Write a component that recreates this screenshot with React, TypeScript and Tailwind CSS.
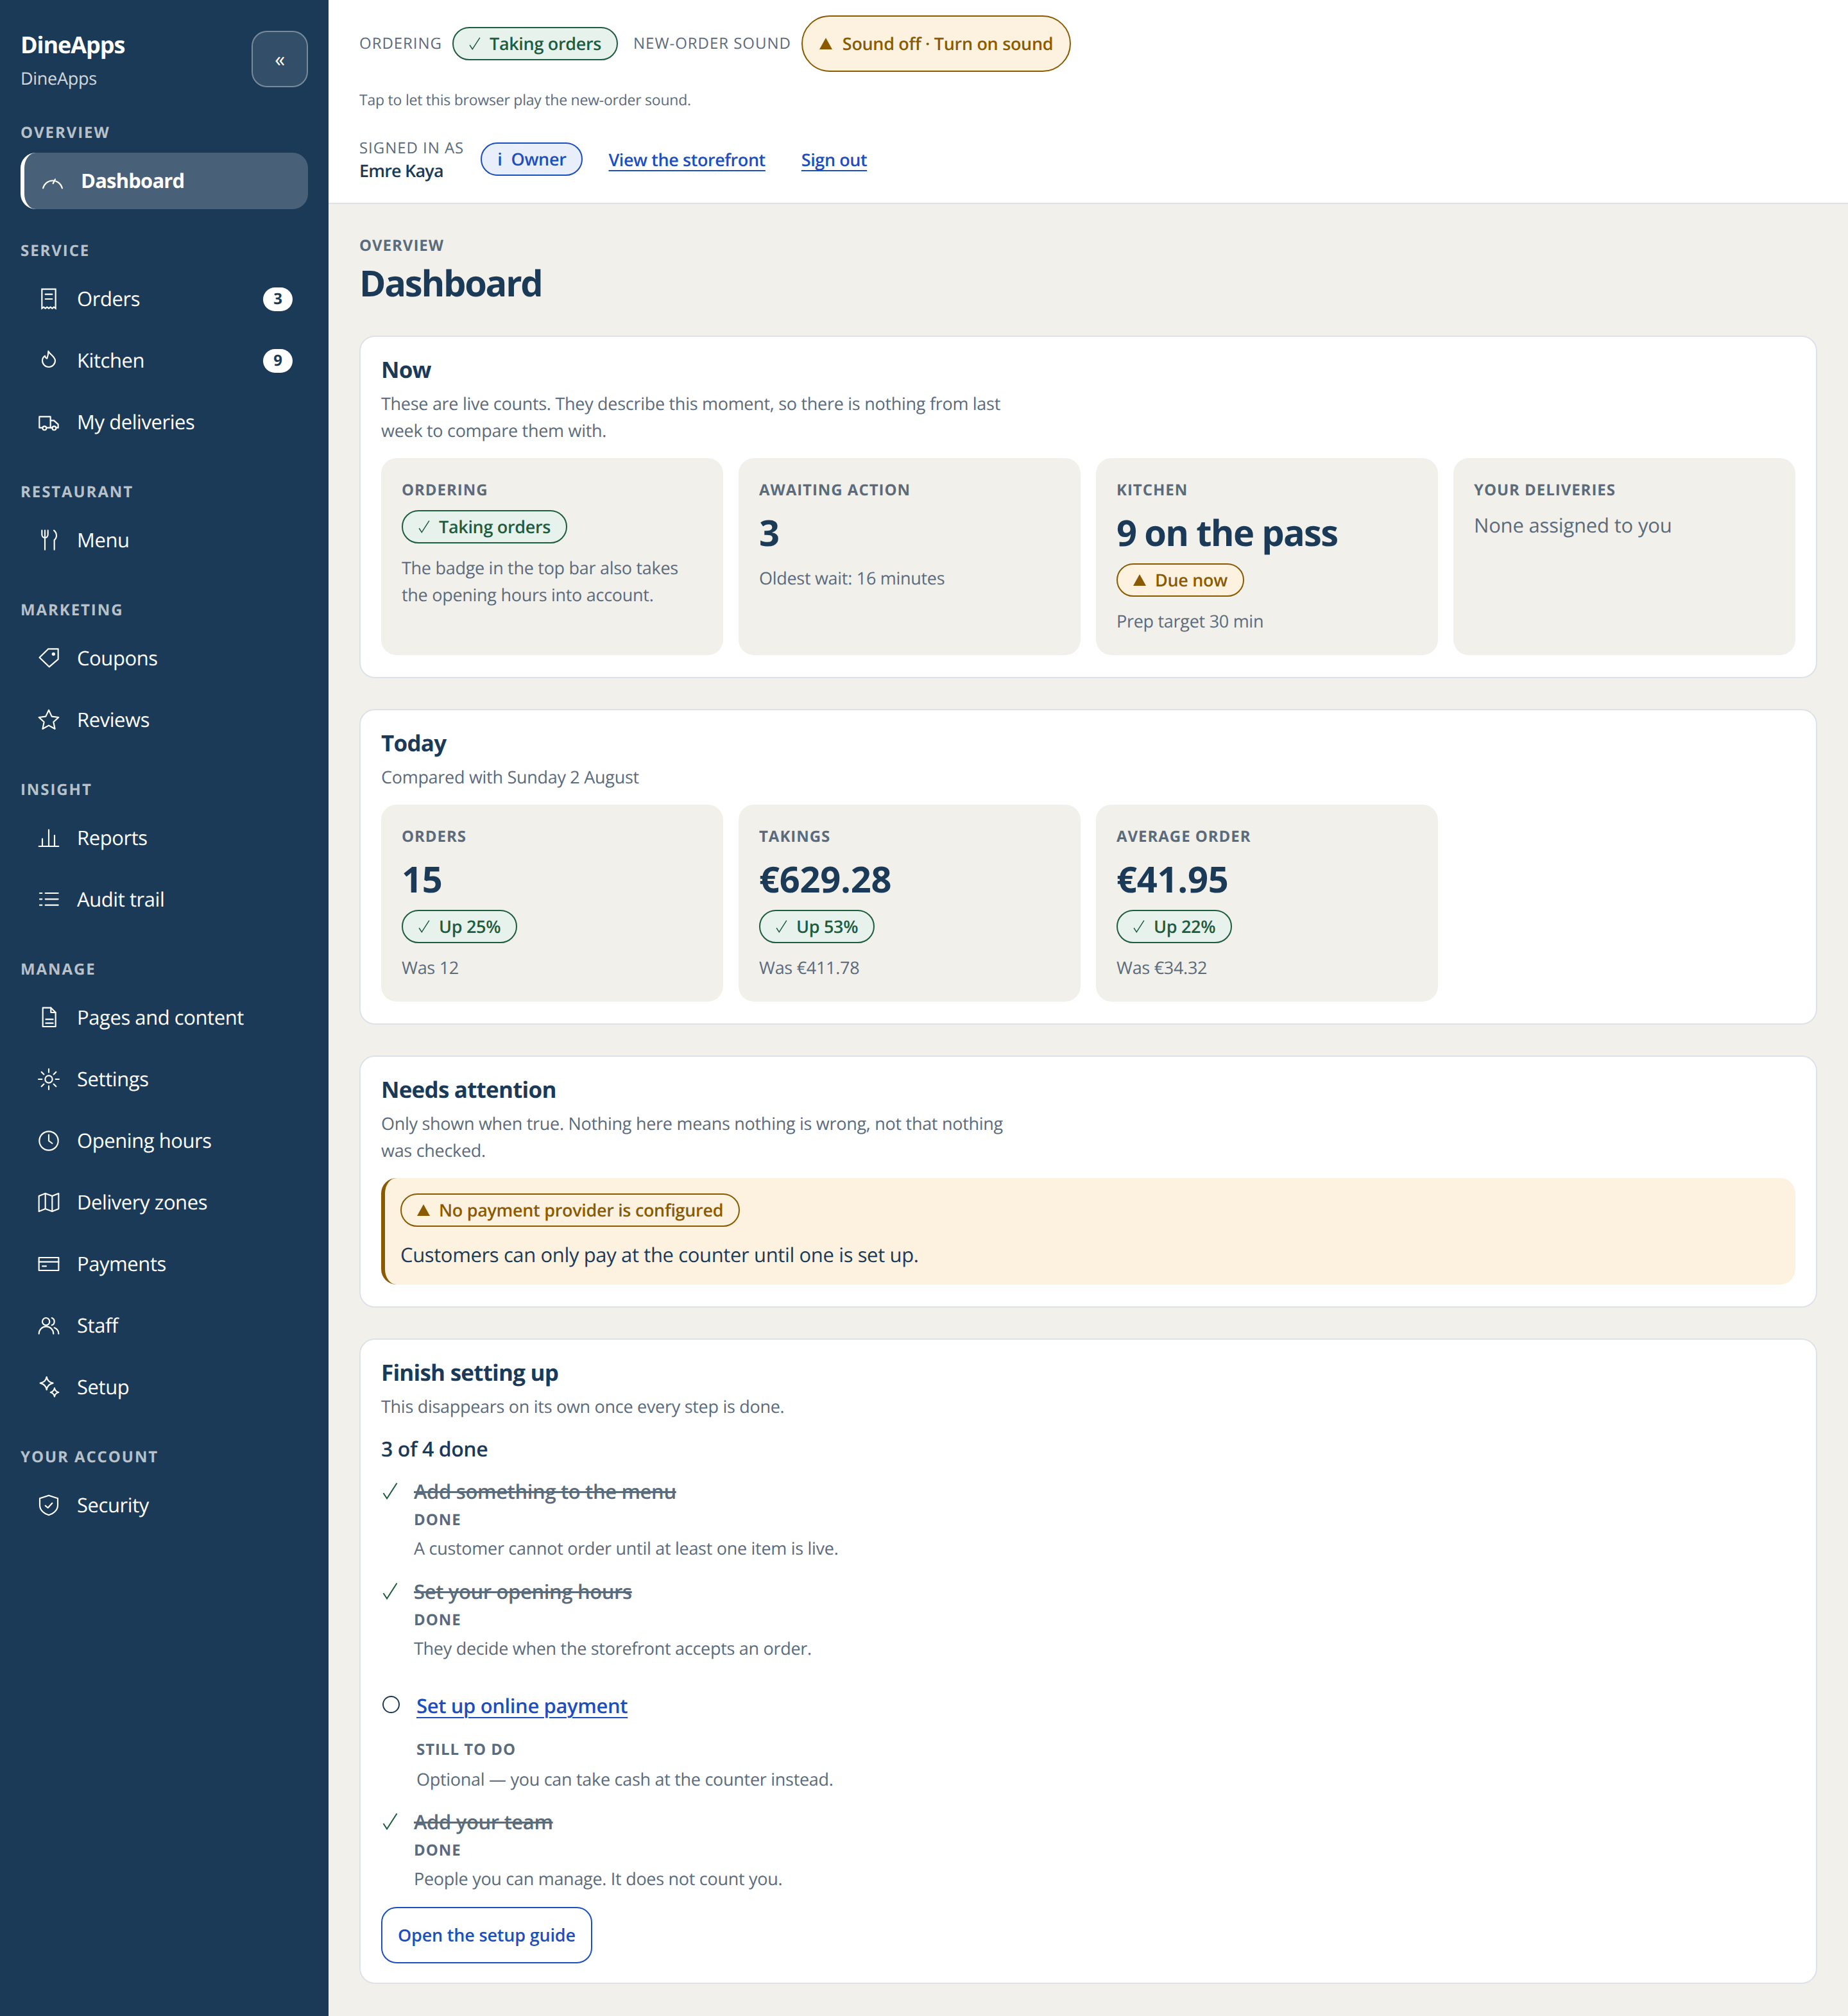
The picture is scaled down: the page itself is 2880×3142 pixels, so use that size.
import type { ReactNode } from 'react';

const Svg = ({ children }: { children: ReactNode }) => (
  <svg viewBox="0 0 24 24" className="h-8 w-8 shrink-0 overflow-visible" fill="none" stroke="currentColor" strokeWidth="1.6" strokeLinecap="round" strokeLinejoin="round">
    {children}
  </svg>
);

const icons: Record<string, ReactNode> = {
  gauge: <Svg><path d="M0.8 20.5a11.5 11.5 0 0 1 22.4 0" /><path d="M15 10l-2.5 5" /></Svg>,
  receipt: <Svg><path strokeLinejoin="miter" d="M4 0.5H20V23l-2-1.5-2 1.5-2-1.5-2 1.5-2-1.5-2 1.5-2-1.5-2 1.5Z" /><path d="M8 6.5H16M8 12H16" /></Svg>,
  flame: <Svg><path d="M11.5 1C12.5 4 19.5 7.5 19.5 12A7.5 7.5 0 0 1 4.5 12C4.5 9.5 6 7.5 7.5 6.5C7.8 8 8.5 9 10 9.5C11 7 11.5 4 11.5 1Z" /></Svg>,
  truck: <Svg><path d="M4.5 18.5H1V5.5H14V18.5H9.5" /><path d="M14 10h4l5 4.5v4h-2" /><path d="M14 18.5h2" /><circle cx="7" cy="19" r="2.2" /><circle cx="18.3" cy="19" r="2.2" /></Svg>,
  menu: <Svg><path d="M4 0.5V5.5a3.5 3.5 0 0 0 7 0V0.5M7.5 0.5V23" /><path d="M18 0.5C20 2 21 5 21 7C21 9 19.5 11 18.5 11.5V23" /></Svg>,
  tag: <Svg><path d="M1.2 11L11.5 1H23V13L12.5 22Z" /><circle cx="17.5" cy="7" r="1.2" fill="currentColor" /></Svg>,
  star: <Svg><path d="M12 0.5L15.5 8L23.5 9L17.5 14.5L19.2 22.5L12 18.5L4.8 22.5L6.5 14.5L0.5 9L8.5 8Z" /></Svg>,
  bars: <Svg><path d="M0.5 21.75H23.5M4.5 13V21.5M12 2.5V21.5M18.75 9V21.5" /></Svg>,
  list: <Svg><path d="M8 4.5H23M8 11.5H23M8 18.5H23M1.5 4.5H4M1.5 11.5H4M1.5 18.5H4" /></Svg>,
  doc: <Svg><path d="M5 0.5H14.5L20 6V22.5H5Z" /><path d="M14.5 0.5V6H20" /><path d="M8.5 14H17M8.5 18.5H17" /></Svg>,
  sun: <Svg><circle cx="12" cy="12" r="4.25" /><path d="M12 0V4M12 20V24M0 12H4M20 12H24M3.5 3.5L6.3 6.3M17.7 17.7L20.5 20.5M3.5 20.5L6.3 17.7M17.7 6.3L20.5 3.5" /></Svg>,
  clock: <Svg><circle cx="12" cy="12" r="11" /><path d="M12 5V12L16 15" /></Svg>,
  map: <Svg><path d="M0.5 4.5L8 1.5L16 4.5L23.5 1.5V19.5L16 22.5L8 19.5L0.5 22.5Z" /><path d="M8 1.5V19.5M16 4.5V22.5" /></Svg>,
  card: <Svg><rect x="0.5" y="4.5" width="23" height="15" /><path d="M0.5 9.5H23.5M4.5 14.5H9" /></Svg>,
  users: <Svg><circle cx="8.75" cy="7.25" r="4.25" /><path d="M0.5 21.5a8.5 8.5 0 0 1 17 0" /><path d="M15.5 3a4.5 4.5 0 0 1 0 8.5" /><path d="M18.5 14.5C21 15.5 23.5 18 23.5 21.5" /></Svg>,
  sparkles: <Svg><path d="M9.5 0Q10.5 6 17 7.2Q10.5 8.5 9.5 15Q8.5 8.5 2 7.2Q8.5 6 9.5 0Z" /><path d="M18.7 13Q19.3 17 23.5 18Q19.3 19 18.7 23Q18.1 19 14 18Q18.1 17 18.7 13Z" /></Svg>,
  shield: <Svg><path d="M12 0.5L22.5 4V12C22.5 18 17 22 12 23.5C7 22 1.5 18 1.5 12V4Z" /><path d="M8 12.5L11 15L16 9.5" /></Svg>,
};

const nav = [
  { label: 'Overview', items: [{ name: 'Dashboard', icon: 'gauge', active: true }] },
  { label: 'Service', items: [{ name: 'Orders', icon: 'receipt', badge: '3' }, { name: 'Kitchen', icon: 'flame', badge: '9' }, { name: 'My deliveries', icon: 'truck' }] },
  { label: 'Restaurant', items: [{ name: 'Menu', icon: 'menu' }] },
  { label: 'Marketing', items: [{ name: 'Coupons', icon: 'tag' }, { name: 'Reviews', icon: 'star' }] },
  { label: 'Insight', items: [{ name: 'Reports', icon: 'bars' }, { name: 'Audit trail', icon: 'list' }] },
  {
    label: 'Manage',
    items: [
      { name: 'Pages and content', icon: 'doc' },
      { name: 'Settings', icon: 'sun' },
      { name: 'Opening hours', icon: 'clock' },
      { name: 'Delivery zones', icon: 'map' },
      { name: 'Payments', icon: 'card' },
      { name: 'Staff', icon: 'users' },
      { name: 'Setup', icon: 'sparkles' },
    ],
  },
  { label: 'Your account', items: [{ name: 'Security', icon: 'shield' }] },
];

const CheckMark = ({ big }: { big?: boolean }) => (
  <svg viewBox="0 0 24 26" className={big ? 'h-[26px] w-6 shrink-0' : 'h-[20px] w-[18px] shrink-0'} fill="none" stroke="currentColor" strokeWidth="2">
    <path d="M1.5 16L7 24.5L22.5 0.5" />
  </svg>
);

const Triangle = () => (
  <svg viewBox="0 0 20 18" className="h-[18px] w-5 shrink-0" fill="currentColor">
    <path d="M10 0L20 18H0Z" />
  </svg>
);

type Tone = 'good' | 'warn' | 'info';

const toneClass: Record<Tone, string> = {
  good: 'border-[#1d5c3f] bg-[#e8f2ec] text-[#1d5c3f]',
  warn: 'border-[#8a5a00] bg-[#fdf2e0] text-[#8a5a00]',
  info: 'border-[#1d4ec0] bg-[#e8effb] text-[#1d4ec0]',
};

const Pill = ({ tone, children, tall }: { tone: Tone; children: ReactNode; tall?: boolean }) => (
  <span className={`inline-flex w-fit items-center rounded-full border-2 text-[27px] leading-[36px] font-semibold tracking-[-0.012em] whitespace-nowrap ${tall ? 'h-[88px] gap-[16px] px-[26px]' : 'h-[52px] gap-[14px] px-6'} ${toneClass[tone]}`}>
    {tone === 'good' && <CheckMark />}
    {tone === 'warn' && <Triangle />}
    {tone === 'info' && <span>i</span>}
    <span>{children}</span>
  </span>
);

const TileLabel = ({ children }: { children: ReactNode }) => (
  <div className="text-[24px] leading-[36px] font-bold tracking-[0.04em] text-[#5a6b7c] uppercase">{children}</div>
);

const Tile = ({ children }: { children: ReactNode }) => (
  <div className="flex flex-col rounded-[24px] bg-[#f2f0eb] p-8">{children}</div>
);

const Value = ({ children, tight }: { children: ReactNode; tight?: boolean }) => (
  <div className={`mt-[14px] text-[56px] leading-[68px] font-bold text-[#1b3a57] ${tight ? 'tracking-[-0.03em]' : 'tracking-[-0.005em]'}`}>{children}</div>
);

const Muted = ({ children, className = '' }: { children: ReactNode; className?: string }) => (
  <p className={`text-[27px] leading-[42px] text-[#5a6b7c] ${className}`}>{children}</p>
);

const Card = ({ title, desc, children, last }: { title: string; desc: string; children: ReactNode; last?: boolean }) => (
  <section className={`rounded-[24px] border-2 border-[#dde2e8] bg-white px-8 pt-8 ${last ? 'pb-[30px]' : 'mb-12 pb-[34px]'}`}>
    <h2 className="text-[35px] leading-[40px] font-bold tracking-[-0.022em] text-[#1b3a57]">{title}</h2>
    <Muted className="mt-[11px] max-w-[1000px]">{desc}</Muted>
    {children}
  </section>
);

const Step = ({ title, note }: { title: string; note: string }) => (
  <div className="mb-[25px] flex">
    <span className="mt-[8px] ml-[2px] w-[49px] shrink-0 text-[#1d5c3f]">
      <CheckMark big />
    </span>
    <div>
      <div className="text-[31px] leading-[44px] font-semibold tracking-[-0.012em] text-[#5a6b7c] line-through">{title}</div>
      <div className="mt-[4px] text-[24px] leading-[36px] font-bold tracking-[0.04em] text-[#5a6b7c]">DONE</div>
      <Muted className="mt-[5px]">{note}</Muted>
    </div>
  </div>
);

export default function App() {
  return (
    <div className="flex min-h-[3142px] w-full bg-[#f2f0eb] font-['Open_Sans',sans-serif] tracking-[-0.018em] [text-rendering:geometricPrecision]">
      <aside className="w-[512px] shrink-0 bg-[#1b3a57] px-8 pt-[46px] text-white">
        <div className="mb-[47px] flex items-start justify-between">
          <div>
            <div className="text-[36px] leading-[48px] font-bold tracking-[-0.03em]">DineApps</div>
            <div className="mt-[8px] text-[27px] leading-[40px] text-white/80">DineApps</div>
          </div>
          <button className="mt-[2px] flex h-[88px] w-[88px] items-center justify-center rounded-[24px] border-2 border-white/35 bg-white/10 text-[32px] leading-none">
            «
          </button>
        </div>
        {nav.map((group) => (
          <div key={group.label} className="mb-[47px]">
            <div className="mb-[13px] text-[24px] leading-[36px] font-bold tracking-[0.08em] text-white/70 uppercase">{group.label}</div>
            <div className="flex flex-col gap-2">
              {group.items.map((item: { name: string; icon: string; badge?: string; active?: boolean }) => (
                <a
                  key={item.name}
                  className={`flex h-[88px] items-center gap-7 rounded-[24px] pr-6 pl-7 text-[31px] leading-[44px] ${item.active ? 'border-l-[6px] border-white bg-white/20 font-bold tracking-[-0.026em]' : 'tracking-[-0.014em]'}`}
                >
                  {icons[item.icon]}
                  <span className="flex-1">{item.name}</span>
                  {item.badge && (
                    <span className="flex h-[37px] w-[46px] items-center justify-center rounded-full bg-white text-[24px] leading-none font-bold text-[#1b3a57]">
                      {item.badge}
                    </span>
                  )}
                </a>
              ))}
            </div>
          </div>
        ))}
      </aside>

      <div className="min-w-0 flex-1">
        <header className="h-[318px] border-b-2 border-[#dde2e8] bg-white pt-6 pl-12">
          <div className="flex h-[88px] items-center">
            <span className="text-[24px] leading-[36px] tracking-[0.04em] text-[#5a6b7c]">ORDERING</span>
            <span className="ml-4"><Pill tone="good">Taking orders</Pill></span>
            <span className="ml-6 text-[24px] leading-[36px] tracking-[0.04em] text-[#5a6b7c]">NEW-ORDER SOUND</span>
            <span className="ml-4"><Pill tone="warn" tall>Sound off · Turn on sound</Pill></span>
          </div>
          <p className="mt-[25px] text-[23px] leading-[36px] tracking-[-0.01em] text-[#5a6b7c]">Tap to let this browser play the new-order sound.</p>
          <div className="mt-[40px] flex items-center">
            <div>
              <div className="text-[24px] leading-[36px] tracking-[0.04em] text-[#5a6b7c]">SIGNED IN AS</div>
              <div className="text-[27px] leading-[34px] font-semibold tracking-[-0.03em] text-[#1b3a57]">Emre Kaya</div>
            </div>
            <span className="ml-[26px]"><Pill tone="info">Owner</Pill></span>
            <a className="mt-[2px] ml-10 text-[27px] leading-[36px] font-semibold tracking-[-0.016em] text-[#1d4ec0] underline decoration-2 underline-offset-[6px]">View the storefront</a>
            <a className="mt-[2px] ml-14 text-[27px] leading-[36px] font-semibold tracking-[-0.016em] text-[#1d4ec0] underline decoration-2 underline-offset-[6px]">Sign out</a>
          </div>
        </header>

        <main className="px-12 pt-[47px] pb-12">
          <div className="text-[24px] leading-[36px] font-bold tracking-[0.04em] text-[#5a6b7c]">OVERVIEW</div>
          <h1 className="mt-[6px] mb-[48px] text-[56px] leading-[68px] font-bold tracking-[-0.04em] text-[#1b3a57]">Dashboard</h1>

          <Card title="Now" desc="These are live counts. They describe this moment, so there is nothing from last week to compare them with.">
            <div className="mt-[22px] grid grid-cols-4 gap-6">
              <Tile>
                <TileLabel>Ordering</TileLabel>
                <div className="mt-[13px]"><Pill tone="good">Taking orders</Pill></div>
                <Muted className="mt-[17px]">The badge in the top bar also takes the opening hours into account.</Muted>
              </Tile>
              <Tile>
                <TileLabel>Awaiting action</TileLabel>
                <Value>3</Value>
                <Muted className="mt-[16px]">Oldest wait: 16 minutes</Muted>
              </Tile>
              <Tile>
                <TileLabel>Kitchen</TileLabel>
                <Value tight>9 on the pass</Value>
                <div className="mt-[14px]"><Pill tone="warn">Due now</Pill></div>
                <Muted className="mt-[17px]">Prep target 30 min</Muted>
              </Tile>
              <Tile>
                <TileLabel>Your deliveries</TileLabel>
                <div className="mt-[15px] text-[31px] leading-[44px] tracking-[-0.006em] text-[#5a6b7c]">None assigned to you</div>
              </Tile>
            </div>
          </Card>

          <Card title="Today" desc="Compared with Sunday 2 August">
            <div className="mt-[22px] grid grid-cols-4 gap-6">
              {[
                { label: 'Orders', value: '15', change: 'Up 25%', was: 'Was 12' },
                { label: 'Takings', value: '€629.28', change: 'Up 53%', was: 'Was €411.78' },
                { label: 'Average order', value: '€41.95', change: 'Up 22%', was: 'Was €34.32' },
              ].map((stat) => (
                <Tile key={stat.label}>
                  <TileLabel>{stat.label}</TileLabel>
                  <Value>{stat.value}</Value>
                  <div className="mt-[14px]"><Pill tone="good">{stat.change}</Pill></div>
                  <Muted className="mt-[17px]">{stat.was}</Muted>
                </Tile>
              ))}
            </div>
          </Card>

          <Card title="Needs attention" desc="Only shown when true. Nothing here means nothing is wrong, not that nothing was checked.">
            <div className="mt-[22px] rounded-[24px] border-l-[6px] border-[#8a5a00] bg-[#fdf2e0] py-6 pl-6">
              <Pill tone="warn">No payment provider is configured</Pill>
              <p className="mt-[22px] text-[31px] leading-[44px] tracking-[-0.012em] text-[#1b3a57]">Customers can only pay at the counter until one is set up.</p>
            </div>
          </Card>

          <Card last title="Finish setting up" desc="This disappears on its own once every step is done.">
            <div className="mt-[24px] mb-[22px] text-[32px] leading-[44px] font-semibold tracking-[-0.013em] text-[#1b3a57]">3 of 4 done</div>
            <Step title="Add something to the menu" note="A customer cannot order until at least one item is live." />
            <Step title="Set your opening hours" note="They decide when the storefront accepts an order." />
            <div className="mb-[24px] flex pt-[22px]">
              <span className="mt-[6px] ml-[2px] mr-[26px] h-[27px] w-[27px] shrink-0 rounded-full border-2 border-[#1b3a57]" />
              <div>
                <a className="text-[31px] leading-[44px] font-semibold tracking-[-0.012em] text-[#1d4ec0] underline decoration-2 underline-offset-[6px]">Set up online payment</a>
                <div className="mt-[28px] text-[24px] leading-[36px] font-bold tracking-[0.04em] text-[#5a6b7c]">STILL TO DO</div>
                <Muted className="mt-[7px]">Optional — you can take cash at the counter instead.</Muted>
              </div>
            </div>
            <Step title="Add your team" note="People you can manage. It does not count you." />
            <button className="-mt-[2px] flex h-[88px] items-center rounded-[24px] border-2 border-[#1d4ec0] bg-white px-6 text-[27px] leading-[36px] font-semibold tracking-[-0.007em] text-[#1d4ec0]">
              Open the setup guide
            </button>
          </Card>
        </main>
      </div>
    </div>
  );
}
